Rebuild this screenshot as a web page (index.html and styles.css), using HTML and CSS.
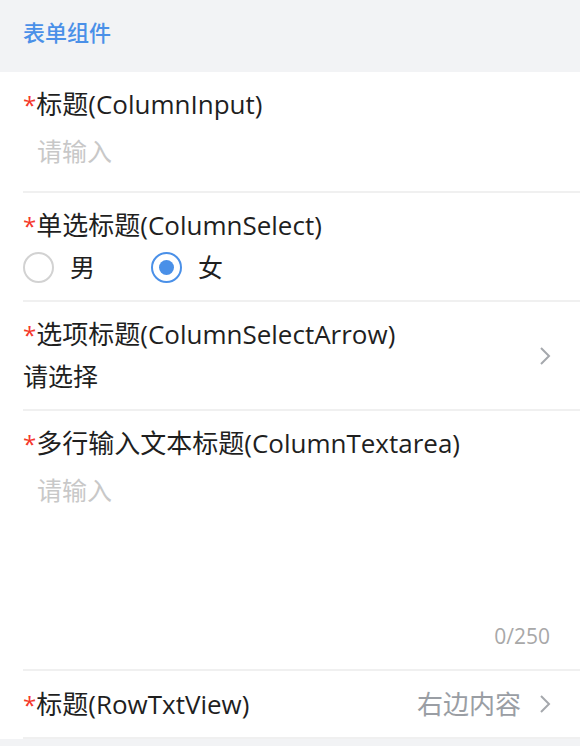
FILE: index.html
```html
<!DOCTYPE html>
<html lang="zh-CN">
<head>
<meta charset="utf-8">
<title>表单组件</title>
<link rel="stylesheet" href="styles.css">
</head>
<body>
<div class="page">
  <header class="section-head">表单组件</header>
  <div class="form">
    <div class="cell cell-input">
      <div class="label"><span class="req">*</span>标题(ColumnInput)</div>
      <div class="placeholder">请输入</div>
    </div>
    <div class="cell cell-radio">
      <div class="label"><span class="req">*</span>单选标题(ColumnSelect)</div>
      <div class="radios">
        <span class="radio"><span class="dot"></span><span class="radio-text">男</span></span>
        <span class="radio checked"><span class="dot"></span><span class="radio-text">女</span></span>
      </div>
    </div>
    <div class="cell cell-select">
      <div class="select-body">
        <div class="label"><span class="req">*</span>选项标题(ColumnSelectArrow)</div>
        <div class="value">请选择</div>
      </div>
      <svg class="arrow" width="14" height="22" viewBox="0 0 14 22"><path d="M3 3 L11 11 L3 19" fill="none" stroke="#a5a8ad" stroke-width="2"/></svg>
    </div>
    <div class="cell cell-textarea">
      <div class="label"><span class="req">*</span>多行输入文本标题(ColumnTextarea)</div>
      <div class="placeholder textarea">请输入</div>
      <div class="count">0/250</div>
    </div>
    <div class="cell cell-row">
      <div class="label"><span class="req">*</span>标题(RowTxtView)</div>
      <div class="row-right">
        <span class="row-value">右边内容</span>
        <svg class="arrow" width="14" height="22" viewBox="0 0 14 22"><path d="M3 3 L11 11 L3 19" fill="none" stroke="#a5a8ad" stroke-width="2"/></svg>
      </div>
    </div>
  </div>
</div>
</body>
</html>
```

FILE: styles.css
```css
* { box-sizing: border-box; }
html, body { margin: 0; padding: 0; }
body {
  background: #f2f3f5;
  font-family: "Open Sans", "Noto Sans CJK SC", sans-serif;
  color: #1f1f1f;
}
.page { width: 580px; }
.section-head {
  height: 72px;
  padding-left: 23px;
  padding-bottom: 11px;
  display: flex;
  align-items: center;
  font-family: "Noto Sans CJK SC", sans-serif;
  font-size: 22px;
  font-weight: 500;
  color: #4a90e8;
}
.form { background: #fff; }
.cell {
  margin-left: 23px;
  border-bottom: 2px solid #f0f0f0;
}
.label {
  font-size: 26px;
  line-height: 34px;
  height: 34px;
  color: #1f1f1f;
  white-space: nowrap;
}
.req { color: #f5382a; font-size: 24px; }
.placeholder {
  font-size: 25px;
  line-height: 36px;
  height: 36px;
  color: #c8c8c8;
  padding-left: 14px;
}
.cell-input { padding: 15px 23px 22px 0; }
.cell-input .placeholder { margin-top: 12px; }
.cell-radio { padding: 15px 0 16px; }
.radios {
  display: flex;
  align-items: center;
  height: 34px;
  margin-top: 8px;
}
.radio {
  display: flex;
  align-items: center;
  margin-right: 56px;
}
.dot {
  width: 31px;
  height: 31px;
  border-radius: 50%;
  border: 2px solid #d2d2d2;
  position: relative;
}
.radio.checked .dot { border-color: #4a90e8; }
.radio.checked .dot::after {
  content: "";
  position: absolute;
  left: 50%;
  top: 50%;
  width: 15px;
  height: 15px;
  margin: -7.5px 0 0 -7.5px;
  border-radius: 50%;
  background: #4a90e8;
}
.radio-text {
  font-size: 25px;
  line-height: 34px;
  height: 34px;
  margin-left: 16px;
}
.cell-select {
  display: flex;
  align-items: center;
  padding: 15px 28px 15px 0;
}
.select-body { flex: 1; }
.value {
  font-size: 25px;
  line-height: 36px;
  height: 36px;
  margin-top: 7px;
}
.cell-textarea {
  padding: 15px 30px 18px 0;
}
.cell-textarea .placeholder { margin-top: 12px; height: 140px; }
.count {
  text-align: right;
  font-size: 21px;
  line-height: 30px;
  height: 30px;
  color: #a8a8a8;
  margin-top: 9px;
}
.cell-row {
  display: flex;
  align-items: center;
  justify-content: space-between;
  padding: 16px 28px 16px 0;
}
.row-right { display: flex; align-items: center; }
.row-value {
  font-size: 26px;
  line-height: 34px;
  color: #9a9ea4;
  margin-right: 17px;
}
.arrow { display: block; }
```
